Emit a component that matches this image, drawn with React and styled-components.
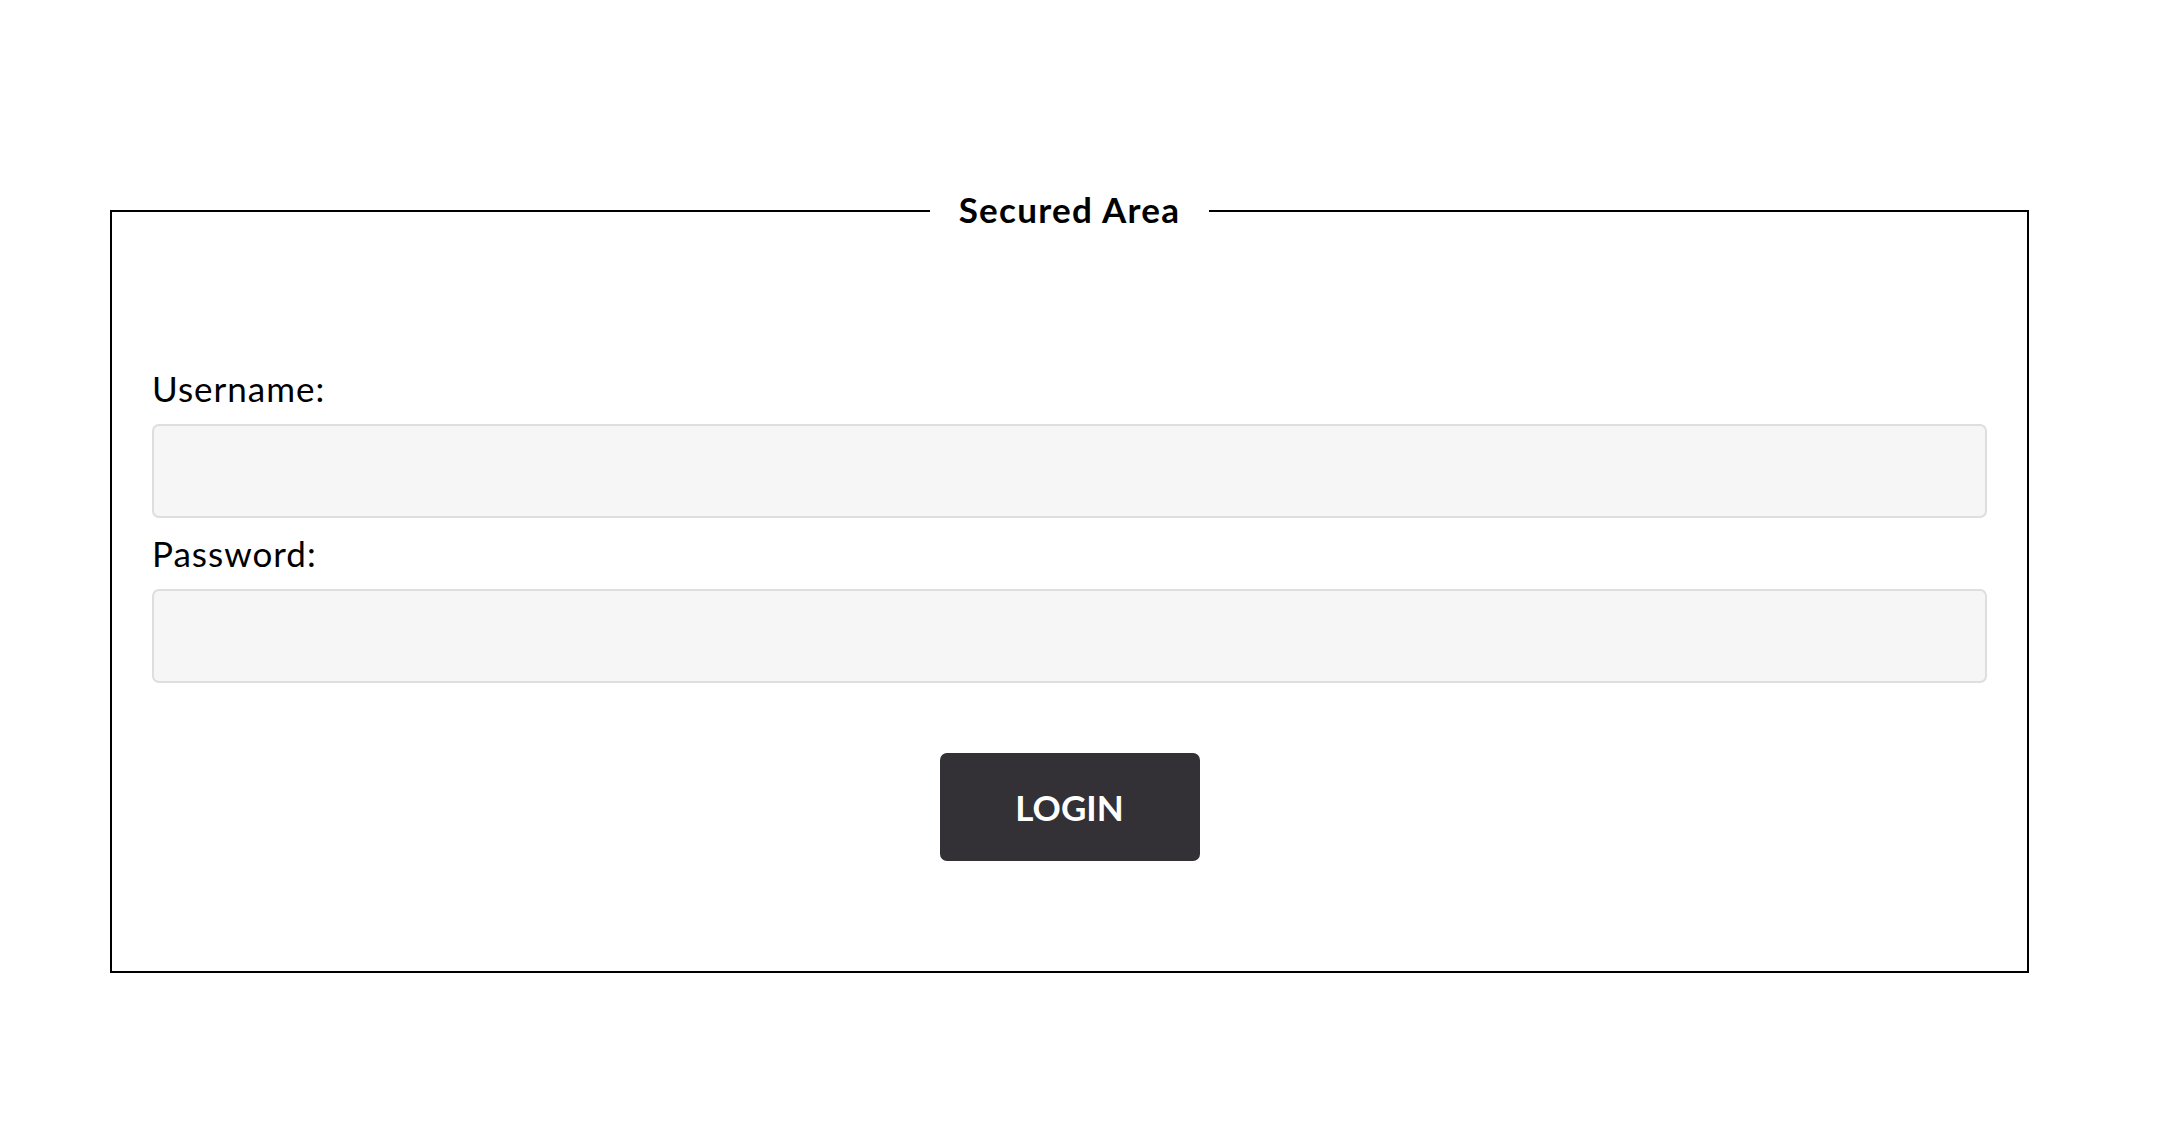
import React from "react";
import styled, { createGlobalStyle } from "styled-components";

const GlobalStyle = createGlobalStyle`
  html, body {
    margin: 0;
    padding: 0;
    background: #fff;
  }
  body {
    font-family: Lato, "Open Sans", sans-serif;
    color: #000;
  }
`;

const Page = styled.main`
  padding: 188px 0 120px 110px;
`;

const Form = styled.form`
  margin: 0;
`;

const Fieldset = styled.fieldset`
  box-sizing: border-box;
  width: 1919px;
  margin: 0;
  padding: 134px 40px 110px;
  border: 2px solid #000;
  display: flex;
  flex-direction: column;
`;

const Legend = styled.legend`
  margin: 0 auto;
  padding: 0 29px 3px;
  font-size: 35px;
  line-height: 42px;
  font-weight: 700;
  letter-spacing: 1.3px;
`;

const Label = styled.label`
  display: block;
  font-size: 35px;
  line-height: 42px;
  font-weight: 400;
  letter-spacing: 1px;
  margin-bottom: 15px;
`;

const Input = styled.input`
  box-sizing: border-box;
  display: block;
  width: 100%;
  height: 94px;
  margin: 0 0 14px;
  padding: 0 20px;
  background: #f6f6f6;
  border: 2px solid #dedede;
  border-radius: 7px;
  font-family: inherit;
  font-size: 30px;
  outline: none;
`;

const Button = styled.button`
  align-self: center;
  width: 260px;
  height: 108px;
  margin-top: 56px;
  border: none;
  border-radius: 7px;
  background: #333036;
  color: #fff;
  font-family: inherit;
  font-size: 35px;
  font-weight: 700;
  text-transform: uppercase;
  cursor: pointer;
`;

export default function App() {
  return (
    <>
      <GlobalStyle />
      <Page>
        <Form onSubmit={(e) => e.preventDefault()}>
          <Fieldset>
            <Legend>Secured Area</Legend>
            <Label htmlFor="username">Username:</Label>
            <Input id="username" name="username" type="text" />
            <Label htmlFor="password">Password:</Label>
            <Input id="password" name="password" type="password" />
            <Button type="submit">Login</Button>
          </Fieldset>
        </Form>
      </Page>
    </>
  );
}
